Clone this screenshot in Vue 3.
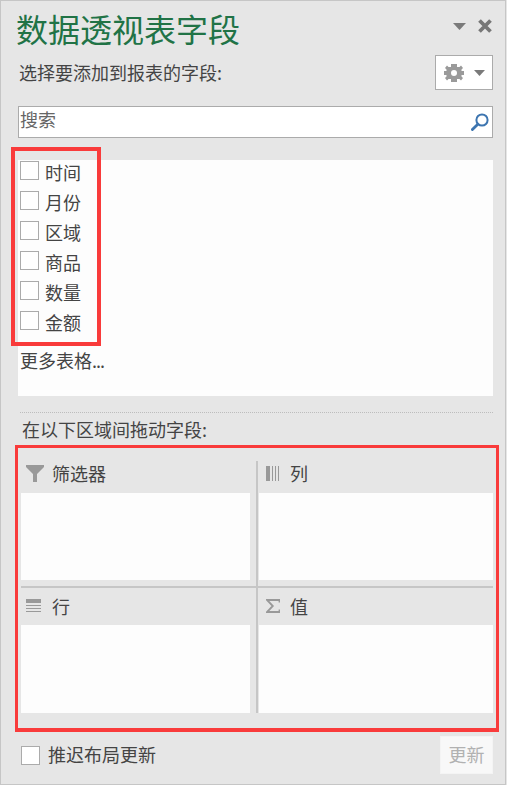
<script setup>
const fields = ['时间', '月份', '区域', '商品', '数量', '金额'];
</script>

<template>
  <div class="panel">
    <div class="header">
      <h1 class="title">数据透视表字段</h1>
      <div class="win-btns">
        <svg width="13" height="7" viewBox="0 0 13 7"><path d="M0 0H13L6.5 7Z" fill="#7a7a7a" /></svg>
        <svg width="14" height="14" viewBox="0 0 14 14"><path d="M1.5 1.5L12.5 12.5M12.5 1.5L1.5 12.5" stroke="#777" stroke-width="3.8" fill="none" /></svg>
      </div>
    </div>

    <div class="sub-row">
      <span class="sub-label">选择要添加到报表的字段:</span>
      <button class="gear-btn" type="button">
        <svg width="20" height="18" viewBox="0 0 20 18">
          <path fill="#9a9a9a" fill-rule="evenodd" d="M7 0h6v3h2.5L17 1.6 19 4l-1.5 1.6V7H20v4h-2.5v1.4L19 14l-2 2.4L15.5 15H13v3H7v-3H4.5L3 16.4 1 14l1.5-1.6V11H0V7h2.5V5.6L1 4l2-2.4L4.5 3H7ZM10 6a3 3 0 1 0 0 6 3 3 0 0 0 0-6Z" />
        </svg>
        <svg width="11" height="6" viewBox="0 0 11 6"><path d="M0 0H11L5.5 6Z" fill="#7a7a7a" /></svg>
      </button>
    </div>

    <div class="search">
      <span class="search-text">搜索</span>
      <svg width="18" height="18" viewBox="0 0 18 18">
        <circle cx="11" cy="7" r="5.6" fill="none" stroke="#3d75b0" stroke-width="2" />
        <path d="M6.8 11.2L1.4 16.6" stroke="#3d75b0" stroke-width="2.8" stroke-linecap="round" />
      </svg>
    </div>

    <div class="list">
      <label v-for="f in fields" :key="f" class="field-row">
        <input type="checkbox" class="check" />
        <span>{{ f }}</span>
      </label>
      <div class="more">更多表格<span class="dots">...</span></div>
      <div class="mark-list"></div>
    </div>

    <div class="divider"></div>
    <div class="drag-label">在以下区域间拖动字段:</div>

    <div class="zones-box">
      <div class="zones">
        <div class="zone zone-left zone-top">
          <div class="zone-head">
            <span class="icon-slot">
              <svg width="18" height="17" viewBox="0 0 18 17"><path d="M0 0H18V2L11 9V17H7V9L0 2Z" fill="#999" /></svg>
            </span>
            <span>筛选器</span>
          </div>
          <div class="zone-body"></div>
        </div>
        <div class="zone zone-right zone-top">
          <div class="zone-head">
            <span class="icon-slot">
              <svg width="14" height="15" viewBox="0 0 14 15">
                <rect width="4" height="15" fill="#999" />
                <rect x="6" width="1" height="15" fill="#999" />
                <rect x="9" width="1" height="15" fill="#999" />
                <rect x="12" width="1" height="15" fill="#999" />
              </svg>
            </span>
            <span>列</span>
          </div>
          <div class="zone-body"></div>
        </div>
        <div class="zone zone-left">
          <div class="zone-head">
            <span class="icon-slot">
              <svg width="15" height="13" viewBox="0 0 15 13">
                <rect width="15" height="4" fill="#999" />
                <rect y="6" width="15" height="1" fill="#999" />
                <rect y="9" width="15" height="1" fill="#999" />
                <rect y="12" width="15" height="1" fill="#999" />
              </svg>
            </span>
            <span>行</span>
          </div>
          <div class="zone-body"></div>
        </div>
        <div class="zone zone-right">
          <div class="zone-head">
            <span class="icon-slot">
              <svg width="14" height="14" viewBox="0 0 14 14"><path d="M13.5 3.6V1H1L6.8 7 1 13H13.5V10.4" fill="none" stroke="#999" stroke-width="1.8" /></svg>
            </span>
            <span>值</span>
          </div>
          <div class="zone-body"></div>
        </div>
      </div>
    </div>

    <div class="footer">
      <label class="defer">
        <input type="checkbox" class="check" />
        <span>推迟布局更新</span>
      </label>
      <button class="update-btn" type="button">更新</button>
    </div>
  </div>
</template>

<style>
html, body { margin: 0; background: #e6e6e6; }
</style>

<style scoped>
.panel {
  position: relative;
  box-sizing: border-box;
  width: 506px;
  height: 785px;
  padding: 6px 12px 0 17px;
  border: 1px solid #c6c6c6;
  background: #e6e6e6;
  color: #444;
  font-family: "Noto Sans CJK SC", "Liberation Sans", sans-serif;
  font-size: 18px;
  overflow: hidden;
}

.header { display: flex; justify-content: space-between; height: 48px; }
.title { margin: -1px 0 0 -2px; font-size: 32px; font-weight: 400; line-height: 44px; color: #217346; }
.win-btns { display: flex; align-items: center; gap: 12px; height: 22px; margin: 8px 1px 0 0; }

.sub-row { display: flex; justify-content: space-between; align-items: center; height: 35px; }
.sub-label { margin: 0 0 1px 1px; }
.gear-btn {
  display: flex;
  align-items: center;
  justify-content: center;
  gap: 10px;
  box-sizing: border-box;
  width: 58px;
  height: 35px;
  padding: 0;
  border: 1px solid #ababab;
  background: #fff;
}

.search {
  display: flex;
  align-items: center;
  justify-content: space-between;
  box-sizing: border-box;
  height: 32px;
  margin-top: 16px;
  padding: 0 3px 0 1px;
  border: 1px solid #ababab;
  background: #fff;
}
.search-text { margin-bottom: 6px; color: #666; line-height: 24px; }

.list {
  position: relative;
  box-sizing: border-box;
  height: 236px;
  margin-top: 22px;
  padding: 1px 0 0 2px;
  background: #fdfdfd;
}
.field-row { display: flex; height: 30px; }
.field-row span { margin-left: 6px; line-height: 22px; }
.check {
  appearance: none;
  flex: none;
  box-sizing: border-box;
  width: 19px;
  height: 19px;
  margin: 0;
  border: 1px solid #ababab;
  background: #fff;
}
.more { margin-top: 7px; line-height: 24px; }
.dots { letter-spacing: -1px; }
.mark-list {
  position: absolute;
  left: -7px;
  top: -13px;
  box-sizing: border-box;
  width: 90px;
  height: 199px;
  border: 4px solid #f93b3b;
}

.divider { height: 0; margin: 16px 0 0 2px; border-top: 1px dotted #bdbdbd; }
.drag-label { margin: 4px 0 0 4px; line-height: 24px; }

.zones-box {
  box-sizing: border-box;
  width: 484px;
  height: 287px;
  margin: 4px 0 0 -3px;
  padding: 13px 3px 15px;
  border: 3px solid #f93b3b;
  border-bottom-width: 4px;
}
.zones { display: grid; grid-template-columns: 237px 235px; grid-template-rows: 127px 125px; }
.zone-left { border-right: 2px solid #c6c6c6; padding-right: 6px; }
.zone-right { padding-left: 1px; }
.zone-top { border-bottom: 2px solid #c6c6c6; padding-bottom: 6px; }
.zone-head { display: flex; align-items: center; box-sizing: border-box; height: 32px; padding-bottom: 8px; }
.zone:not(.zone-top) .zone-head { height: 37px; padding-bottom: 2px; }
.icon-slot { display: flex; flex: none; box-sizing: border-box; width: 31px; padding-left: 5px; }
.zone-right .icon-slot { padding-left: 7px; }
.zone-body { height: 87px; background: #fdfdfd; }
.zone:not(.zone-top) .zone-body { height: 88px; }

.footer { display: flex; justify-content: space-between; align-items: center; height: 38px; margin-top: 4px; }
.defer { display: flex; align-items: center; margin-left: 3px; }
.defer span { margin: 0 0 2px 8px; }
.update-btn {
  width: 53px;
  height: 38px;
  padding: 0 0 2px;
  border: 1px solid #f4f4f4;
  background: #f8f8f8;
  color: #b1b1b1;
  font: inherit;
}
</style>
